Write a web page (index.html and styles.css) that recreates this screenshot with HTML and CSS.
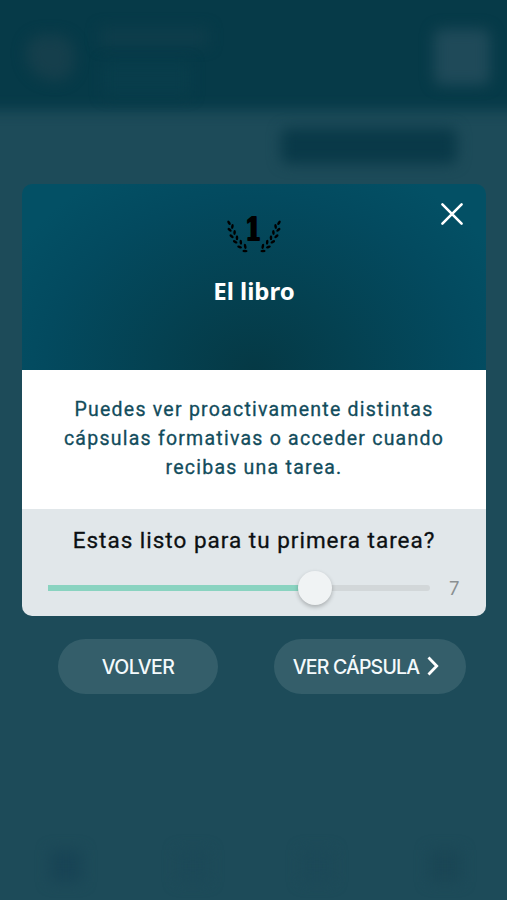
FILE: index.html
```html
<!DOCTYPE html>
<html lang="es">
<head>
  <meta charset="UTF-8">
  <meta name="viewport" content="width=device-width, initial-scale=1.0">
  <title>El libro</title>
  <link rel="stylesheet" href="styles.css">
</head>
<body>
  <div class="backdrop">
    <div class="blur topbar"></div>
    <div class="blur avatar"></div>
    <div class="blur name"></div>
    <div class="blur level"></div>
    <div class="blur menu"></div>
    <div class="blur pill"></div>
    <div class="blur tab tab-home"></div>
    <div class="blur tab tab-list"></div>
    <div class="blur tab tab-chart"></div>
    <div class="blur tab tab-user"></div>
  </div>

  <main class="screen">
    <section class="card">
      <header class="card-header">
        <button class="close" aria-label="Cerrar">
          <svg width="24" height="24" viewBox="0 0 24 24" fill="none" stroke="#fff" stroke-width="2.6" stroke-linecap="round">
            <path d="M2.4 2.4 21.6 21.6M21.6 2.4 2.4 21.6"/>
          </svg>
        </button>
        <svg class="badge" width="56" height="40" viewBox="0 0 56 40">
          <defs>
            <g id="branch">
              <ellipse cx="3" cy="7.8" rx="1.3" ry="2.5" transform="rotate(-32 3 7.8)"/>
              <ellipse cx="6.4" cy="11.4" rx="1.3" ry="2.5" transform="rotate(8 6.4 11.4)"/>
              <ellipse cx="3.6" cy="14.8" rx="1.3" ry="2.5" transform="rotate(-48 3.6 14.8)"/>
              <ellipse cx="8.6" cy="17.4" rx="1.3" ry="2.5" transform="rotate(4 8.6 17.4)"/>
              <ellipse cx="5.6" cy="21.2" rx="1.3" ry="2.5" transform="rotate(-52 5.6 21.2)"/>
              <ellipse cx="11" cy="22.8" rx="1.3" ry="2.5"/>
              <ellipse cx="9.2" cy="26.8" rx="1.3" ry="2.5" transform="rotate(-62 9.2 26.8)"/>
              <ellipse cx="14.8" cy="27.2" rx="1.3" ry="2.5" transform="rotate(-6 14.8 27.2)"/>
              <ellipse cx="13.6" cy="32" rx="1.3" ry="2.5" transform="rotate(-72 13.6 32)"/>
              <ellipse cx="19.2" cy="31.4" rx="1.3" ry="2.7" transform="rotate(-12 19.2 31.4)"/>
              <ellipse cx="19" cy="36" rx="1.3" ry="2.6" transform="rotate(-88 19 36)"/>
            </g>
          </defs>
          <use href="#branch"/>
          <use href="#branch" transform="matrix(-1 0 0 1 56 0)"/>
          <text class="badge-num" transform="translate(27.2 25.4) scale(.74 1)" text-anchor="middle">1</text>
        </svg>
        <h1 class="title">El libro</h1>
      </header>
      <p class="info">Puedes ver proactivamente distintas<br>cápsulas formativas o acceder cuando<br>recibas una tarea.</p>
      <div class="question">
        <h2 class="question-text">Estas listo para tu primera tarea?</h2>
        <div class="slider">
          <div class="track">
            <div class="fill" style="width: 70%"></div>
            <div class="thumb" style="left: 70%"></div>
          </div>
          <span class="value">7</span>
        </div>
      </div>
    </section>

    <div class="actions">
      <button class="btn btn-back"><span>VOLVER</span></button>
      <button class="btn btn-next">
        <span>VER CÁPSULA</span>
        <svg width="12" height="20" viewBox="0 0 12 20" fill="none" stroke="#fff" stroke-width="2.8">
          <path d="M1.5 1.6 9.7 10 1.5 18.4"/>
        </svg>
      </button>
    </div>
  </main>
</body>
</html>
```
FILE: styles.css
```css
:root {
  --bg: #1d4b59;
  --accent: #89d3c0;
}
* {
  box-sizing: border-box;
}
body {
  margin: 0;
  height: 900px;
  position: relative;
  overflow: hidden;
  background: var(--bg);
  font-family: Roboto, sans-serif;
}
button {
  border: none;
  padding: 0;
  cursor: pointer;
}

/* blurred screen behind the dialog */
.backdrop {
  position: absolute;
  inset: 0;
  overflow: hidden;
}
.blur {
  position: absolute;
  filter: blur(7px);
}
.topbar {
  left: -20px;
  right: -20px;
  top: -20px;
  height: 130px;
  background: #063a48;
}
.avatar {
  left: 26px;
  top: 35px;
  width: 48px;
  height: 46px;
  border-radius: 50% 50% 50% 80%;
  background: #153f4c;
}
.name {
  left: 100px;
  top: 28px;
  width: 108px;
  height: 18px;
  background: #0e3d4b;
}
.level {
  left: 104px;
  top: 62px;
  width: 86px;
  height: 34px;
  background: #083d4b;
}
.menu {
  left: 434px;
  top: 29px;
  width: 56px;
  height: 56px;
  border-radius: 8px;
  background: #1f4a59;
}
.pill {
  left: 281px;
  top: 128px;
  width: 176px;
  height: 36px;
  border-radius: 8px;
  background: #093948;
}
.tab {
  top: 850px;
  width: 32px;
  height: 32px;
  background: #1c4958;
}
.tab-home {
  left: 50px;
  background: #184455;
}
.tab-list {
  left: 177px;
}
.tab-chart {
  left: 301px;
}
.tab-user {
  left: 429px;
  background: #1a4655;
}

.screen {
  position: relative;
  padding: 184px 21px 0 22px;
}
.card {
  border-radius: 10px;
  overflow: hidden;
}
.card-header {
  position: relative;
  height: 185.5px;
  display: flex;
  flex-direction: column;
  align-items: center;
  padding-top: 31px;
  background: radial-gradient(ellipse 280px 230px at 50% 100%, #053945 0%, #044151 35%, #034a5f 75%, #035065 100%);
}
.close {
  position: absolute;
  top: 18px;
  right: 22px;
  width: 24px;
  height: 24px;
  background: none;
}
.close svg {
  display: block;
}
.badge {
  overflow: visible;
}
.badge-num {
  font: bold 32px/1 "DejaVu Serif", serif;
  stroke: #000;
  stroke-width: 2.2;
  stroke-linejoin: round;
}
.title {
  margin: 20px 0 0;
  font: 700 24px/32px "Noto Sans", sans-serif;
  color: #fff;
}
.info {
  margin: 0;
  height: 139px;
  padding-top: 25px;
  background: #fff;
  color: #124c5c;
  font-size: 19.5px;
  line-height: 29.3px;
  letter-spacing: 1.24px;
  text-align: center;
  white-space: nowrap;
  -webkit-text-stroke: .3px;
}
.question {
  height: 107.5px;
  padding: 16px 26px 0;
  background: #e1e7ea;
}
.question-text {
  margin: 0;
  font-size: 22.5px;
  font-weight: 400;
  line-height: 30px;
  letter-spacing: 1px;
  color: #0c1012;
  text-align: center;
  white-space: nowrap;
  -webkit-text-stroke: .3px;
}
.slider {
  display: flex;
  align-items: center;
  height: 36px;
  margin-top: 15px;
}
.track {
  position: relative;
  width: 382px;
  height: 6px;
  border-radius: 0 3px 3px 0;
  background: #d2d7d9;
}
.fill {
  height: 6px;
  background: var(--accent);
}
.thumb {
  position: absolute;
  top: -14px;
  width: 34px;
  height: 34px;
  margin-left: -17px;
  border-radius: 50%;
  background: #f0f3f4;
  box-shadow: 0 2px 4px rgba(0, 0, 0, .25);
}
.value {
  margin-left: 19px;
  font: 18.5px Inter, sans-serif;
  color: #8b9092;
}

.actions {
  display: flex;
  justify-content: space-between;
  padding: 23px 20px 0 36px;
}
.btn {
  display: flex;
  align-items: center;
  justify-content: center;
  gap: 8px;
  height: 54.5px;
  border-radius: 28px;
  background: #345e6a;
  color: #f4fafc;
  font: 500 19.5px Inter, sans-serif;
  letter-spacing: -.6px;
  white-space: nowrap;
}
.btn span {
  padding-top: 2px;
}
.btn-back {
  width: 160px;
}
.btn-next {
  width: 192px;
  padding-right: 8px;
  letter-spacing: -.83px;
}
```
